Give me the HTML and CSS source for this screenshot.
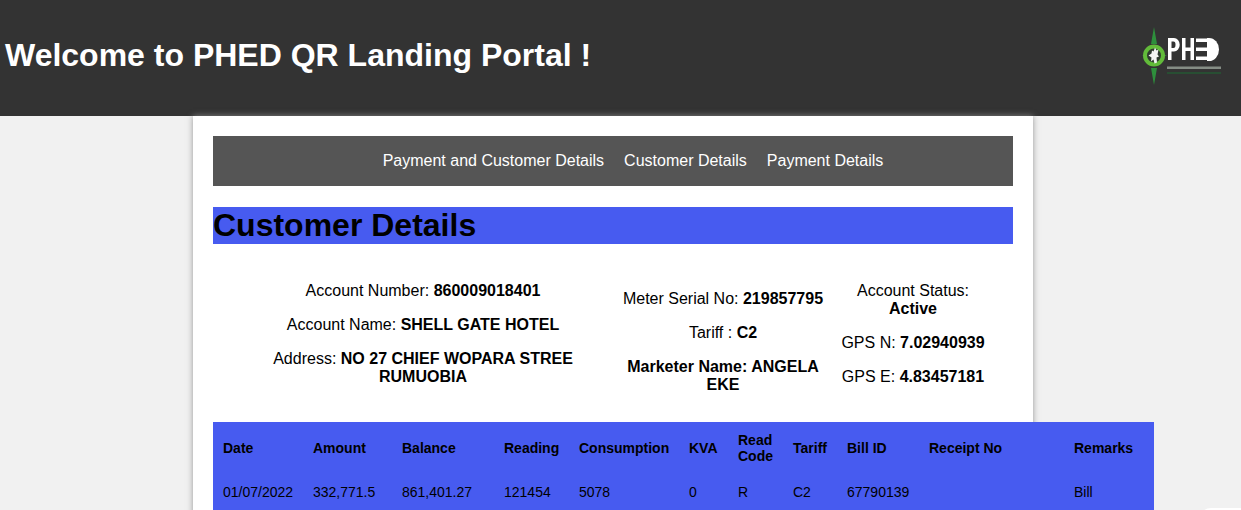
FILE: index.html
```html
<!DOCTYPE html>
<html lang="en">
<head>
<meta charset="utf-8">
<title>PHED QR Landing Portal</title>
<link rel="stylesheet" href="styles.css">
</head>
<body>
<header class="top">
  <h1 class="welcome">Welcome to PHED QR Landing Portal !</h1>
  <svg class="logo" width="82" height="62" viewBox="1140 25 82 62" aria-label="PHED logo">
    <path d="M1154 27l3 17h-6zM1154 85l-3-17h6zM1142 55.500l8-2v4zM1167 55.500l-8-2v4z" fill="#2e8f3c"/>
    <circle cx="1154" cy="55.500" r="9" fill="#2f3a2f" stroke="#62bb3a" stroke-width="4"/>
    <path d="M1155 47.500l1.500 3 2-1-1 5 1.500 2-2.500 1 0.500 5-2.500 1-1-4-2.500 2 0.500-4-3-2 3-2 0.500-3 1.500 1z" fill="#f4f4f4"/>
    <path d="M1168 38h6a5.500 6.500 0 0 1 0 13.500h-2.500v8.500h-3.500zM1171.500 41.500v6.500h2a2 3.250 0 0 0 0-6.500z" fill="#fff" fill-rule="evenodd"/>
    <path d="M1182 38h3.500v9.500h5v-9.500h3.500v22h-3.500v-9h-5v9h-3.500z" fill="#fff"/>
    <path d="M1196 38.500h11v3.500h-11zM1196 47.500h11v3.500h-11zM1196 56.500h11v3.500h-11z" fill="#fff"/>
    <path d="M1207 38h2a10 11.500 0 0 1 0 23h-2z" fill="#fff"/>
    <rect x="1167" y="66.500" width="54" height="2.500" fill="#858d85"/>
    <rect x="1167" y="72.500" width="54" height="1" fill="#1f6b35"/>
  </svg>
</header>
<main class="card">
  <nav class="menu">
    <a class="menu-link">Payment and Customer Details</a>
    <a class="menu-link">Customer Details</a>
    <a class="menu-link">Payment Details</a>
  </nav>
  <h1 class="section-title">Customer Details</h1>
  <section class="details">
    <div class="col">
      <p>Account Number: <b>860009018401</b></p>
      <p>Account Name: <b>SHELL GATE HOTEL</b></p>
      <p>Address: <b>NO 27 CHIEF WOPARA STREE RUMUOBIA</b></p>
    </div>
    <div class="col col-b">
      <p>Meter Serial No: <b>219857795</b></p>
      <p>Tariff : <b>C2</b></p>
      <p><b>Marketer Name: ANGELA EKE</b></p>
    </div>
    <div class="col">
      <p>Account Status: <b>Active</b></p>
      <p>GPS N: <b>7.02940939</b></p>
      <p>GPS E: <b>4.83457181</b></p>
    </div>
  </section>
  <table class="bills">
    <colgroup>
      <col class="c-date"><col class="c-amount"><col class="c-balance"><col class="c-reading"><col class="c-cons"><col class="c-kva"><col class="c-read"><col class="c-tariff"><col class="c-bill"><col class="c-receipt"><col class="c-remarks">
    </colgroup>
    <thead>
      <tr><th>Date</th><th>Amount</th><th>Balance</th><th>Reading</th><th>Consumption</th><th>KVA</th><th>Read Code</th><th>Tariff</th><th>Bill ID</th><th>Receipt No</th><th>Remarks</th></tr>
    </thead>
    <tbody>
      <tr><td>01/07/2022</td><td>332,771.5</td><td>861,401.27</td><td>121454</td><td>5078</td><td>0</td><td>R</td><td>C2</td><td>67790139</td><td></td><td>Bill</td></tr>
    </tbody>
  </table>
</main>
<div class="corner-widget"></div>
</body>
</html>
```
FILE: styles.css
```css
html, body {
  height: 510px;
  overflow: hidden;
}
body {
  margin: 0;
  background: #f1f1f1;
  font-family: "Liberation Sans", Arial, sans-serif;
  color: #000;
  position: relative;
}
.top {
  height: 116px;
  background: #333;
  display: flex;
  align-items: flex-start;
  justify-content: space-between;
  padding: 37px 19px 0 5px;
  box-sizing: border-box;
}
.welcome {
  margin: 0;
  color: #fff;
  font-size: 32px;
  line-height: 37px;
}
.logo {
  margin-top: -12px;
}
.card {
  position: relative;
  width: 840px;
  box-sizing: border-box;
  margin: 0 0 0 193px;
  padding: 20px;
  background: #fff;
  height: 500px;
  box-shadow: 0 0 6px rgba(140,140,140,.9);
}
.menu {
  height: 50px;
  background: #555;
  display: flex;
  justify-content: center;
  align-items: center;
  gap: 20px;
  padding-left: 40px;
}
.menu-link {
  color: #fff;
  font-size: 16px;
}
.section-title {
  margin: 21px 0 0;
  background: #475bf0;
  font-size: 32px;
  line-height: 37px;
}
.details {
  display: grid;
  grid-template-columns: 380px 220px 160px;
  align-items: start;
  padding-left: 20px;
  margin-top: 38px;
  text-align: center;
  font-size: 16px;
  line-height: 18px;
}
.col p {
  margin: 0 0 16px;
}
.col p:last-child {
  margin-bottom: 0;
}
.col-b {
  margin-top: 8px;
  padding: 0 9px;
}
.bills {
  margin-top: 28px;
  width: 941px;
  table-layout: fixed;
  border-collapse: collapse;
  background: #475bf0;
  font-size: 14px;
  line-height: 16px;
  text-align: left;
}
.bills th, .bills td {
  padding: 10px;
  vertical-align: middle;
}
.c-date { width: 90px; }
.c-amount { width: 89px; }
.c-balance { width: 102px; }
.c-reading { width: 75px; }
.c-cons { width: 110px; }
.c-kva { width: 49px; }
.c-read { width: 55px; }
.c-tariff { width: 54px; }
.c-bill { width: 82px; }
.c-receipt { width: 145px; }
.c-remarks { width: 90px; }
.corner-widget {
  position: absolute;
  right: -20px;
  bottom: -22px;
  width: 62px;
  height: 24px;
  border-radius: 12px;
  background: #fff;
}
```
